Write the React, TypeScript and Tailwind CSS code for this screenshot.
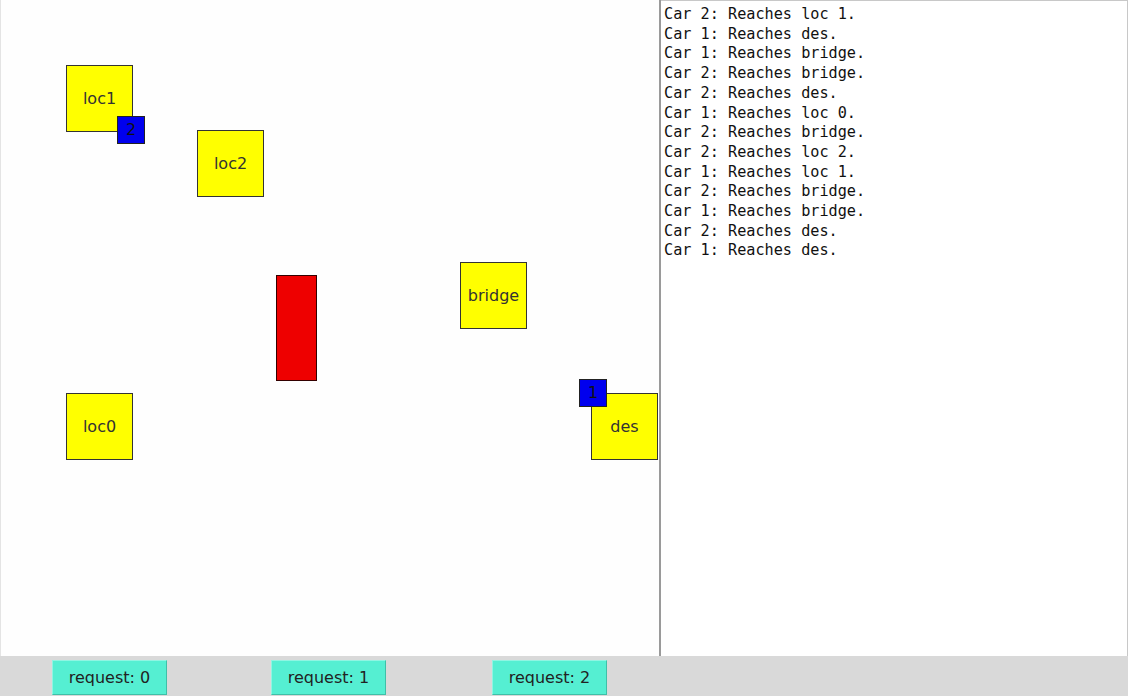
const log = [
  "Car 2: Reaches loc 1.",
  "Car 1: Reaches des.",
  "Car 1: Reaches bridge.",
  "Car 2: Reaches bridge.",
  "Car 2: Reaches des.",
  "Car 1: Reaches loc 0.",
  "Car 2: Reaches bridge.",
  "Car 2: Reaches loc 2.",
  "Car 1: Reaches loc 1.",
  "Car 2: Reaches bridge.",
  "Car 1: Reaches bridge.",
  "Car 2: Reaches des.",
  "Car 1: Reaches des.",
];

// positions inside the canvas (canvas has a 1px left border)
const places = [
  { name: "loc1", x: 65, y: 65 },
  { name: "loc2", x: 196, y: 130 },
  { name: "bridge", x: 459, y: 262 },
  { name: "loc0", x: 65, y: 393 },
  { name: "des", x: 590, y: 393 },
];

const cars = [
  { id: 2, x: 116, y: 116 },
  { id: 1, x: 578, y: 379 },
];

const Place = ({ name, x, y }: { name: string; x: number; y: number }) => (
  <div
    className="absolute w-[67px] h-[67px] bg-[#ffff00] border border-[#333] flex items-center justify-center text-[16px] text-[#333]"
    style={{ left: x, top: y }}
  >
    {name}
  </div>
);

const Car = ({ id, x, y }: { id: number; x: number; y: number }) => (
  <div
    className="absolute w-[28px] h-[28px] bg-[#0000ee] border border-[#222] flex items-center justify-center text-[16px] text-[#111]"
    style={{ left: x, top: y }}
  >
    {id}
  </div>
);

export default function App() {
  return (
    <div className="w-[1128px] h-[696px] flex flex-col bg-[#d9d9d9] font-['DejaVu_Sans',sans-serif]">
      <div className="flex h-[656px]">
        {/* canvas */}
        <div className="relative w-[659px] h-full bg-[#fefefe] border-l border-[#e4e4e4]">
          {places.map((p) => (
            <Place key={p.name} {...p} />
          ))}
          <div className="absolute left-[275px] top-[275px] w-[41px] h-[106px] bg-[#ee0000] border border-[#330000]" />
          {cars.map((c) => (
            <Car key={c.id} {...c} />
          ))}
        </div>
        <div className="w-[2px] h-full bg-[#9a9a9a]" />
        {/* log */}
        <div className="flex-1 h-full bg-white border-t border-r border-[#c8c8c8] pl-[3px] pt-[4px] font-['DejaVu_Sans_Mono',monospace] text-[15.2px] leading-[19.7px] text-[#111]">
          {log.map((line, i) => (
            <div key={i} className="whitespace-pre">
              {line}
            </div>
          ))}
        </div>
      </div>
      {/* buttons */}
      <div className="relative flex-1">
        {[0, 1, 2].map((n) => (
          <button
            key={n}
            className="absolute top-[4px] w-[115px] h-[35px] bg-[#55efd2] border-t border-l border-[#8ff5e2] border-r border-b border-r-[#3fc0a8] border-b-[#3fc0a8] text-[16px] text-[#222] flex items-center justify-center"
            style={{ left: [52, 271, 492][n] }}
          >
            request: {n}
          </button>
        ))}
      </div>
    </div>
  );
}
